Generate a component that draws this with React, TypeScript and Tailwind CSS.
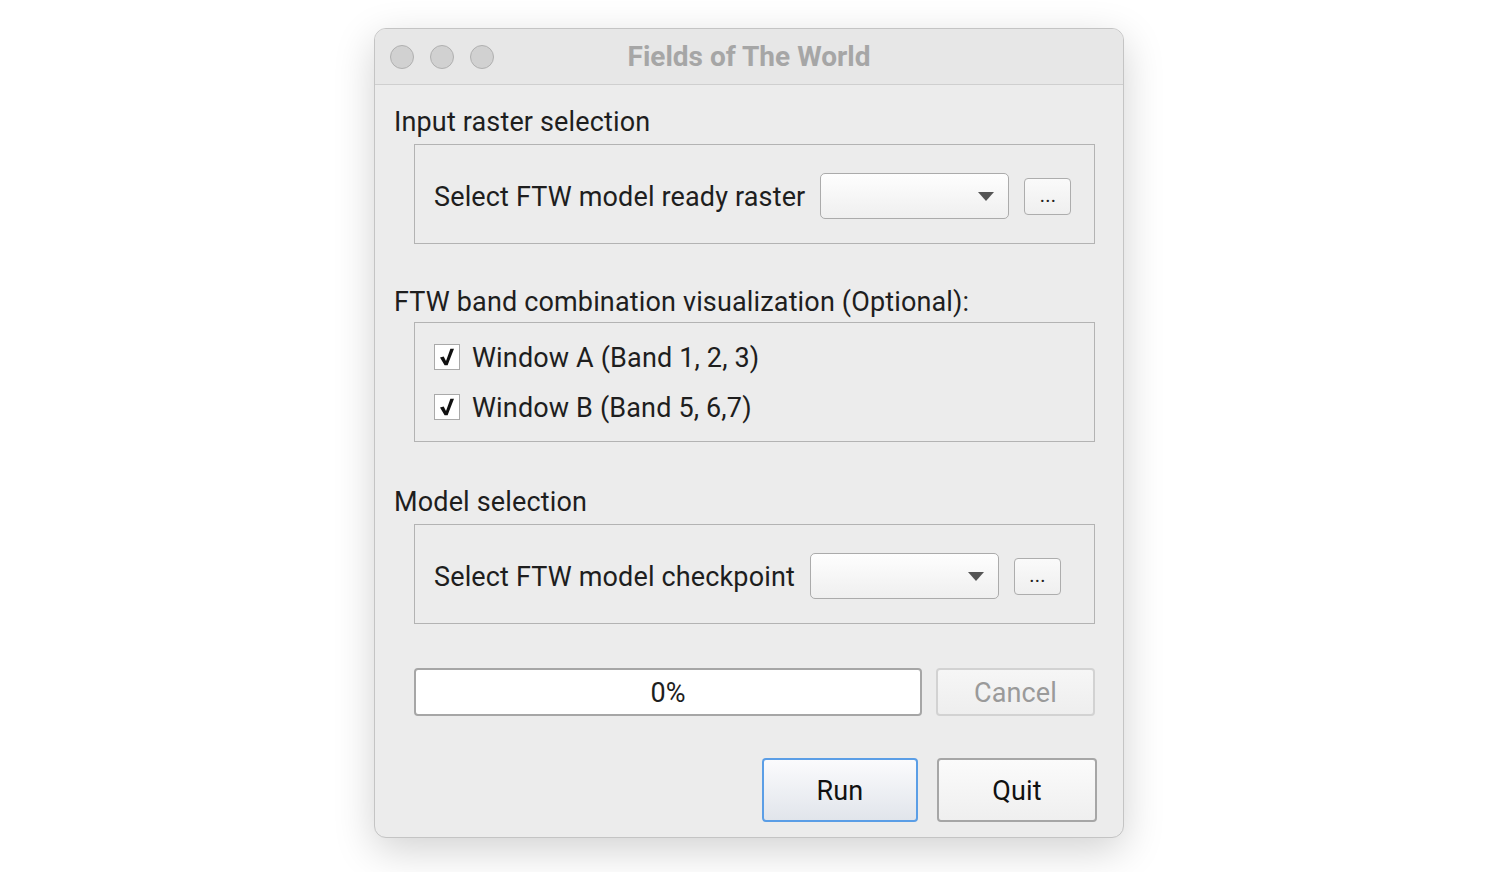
import React from "react";

const font = { fontFamily: "Roboto, 'Liberation Sans', sans-serif" };

function Combo() {
  return (
    <div className="flex h-[46px] w-[189px] items-center justify-end rounded-[5px] border border-[#ababab] bg-gradient-to-b from-[#fefefe] to-[#efefef] pr-[14px]">
      <svg width="16" height="9" viewBox="0 0 16 9">
        <path d="M0 0 L16 0 L8 9 Z" fill="#555555" />
      </svg>
    </div>
  );
}

function Dots() {
  return (
    <div className="flex h-[37px] w-[47px] items-center justify-center rounded-[4px] border border-[#adadad] bg-gradient-to-b from-[#fafafa] to-[#efefef] pb-[2px] text-[20px] leading-none text-[#222]">
      ...
    </div>
  );
}

function Check({ label }: { label: string }) {
  return (
    <div className="flex h-[26px] items-center gap-[12px]">
      <div className="flex h-[26px] w-[26px] items-center justify-center border border-[#a9a9a9] bg-white">
        <svg width="18" height="18" viewBox="0 0 18 18">
          <path d="M2 9.4 L5.7 8.4 L8 13 L12.4 0.8 L16 0.8 L9.6 17.2 L6.6 17.2 Z" fill="#111" />
        </svg>
      </div>
      <span className="pt-[2px] text-[27px] leading-none tracking-[0.15px] text-[#1e1e1e]">{label}</span>
    </div>
  );
}

export default function App() {
  return (
    <div className="min-h-[872px] w-[1504px] bg-white pl-[374px] pt-[28px]" style={font}>
      <div className="flex h-[810px] w-[750px] flex-col overflow-hidden rounded-[12px] border border-[#c4c4c4] bg-[#ececec] shadow-[0_12px_40px_rgba(0,0,0,0.18)]">
        {/* Title bar */}
        <div className="relative flex h-[56px] shrink-0 items-center border-b border-[#cfcfcf] bg-[#e7e7e7]">
          <div className="flex gap-[16px] pl-[15px]">
            <div className="h-[24px] w-[24px] rounded-full border border-[#b0b0b0] bg-[#d1d1d1]" />
            <div className="h-[24px] w-[24px] rounded-full border border-[#b0b0b0] bg-[#d1d1d1]" />
            <div className="h-[24px] w-[24px] rounded-full border border-[#b0b0b0] bg-[#d1d1d1]" />
          </div>
          <div className="absolute inset-0 flex items-center justify-center text-[28px] font-bold text-[#a6a6a6]">
            Fields of The World
          </div>
        </div>

        {/* Body */}
        <div className="flex flex-col pl-[19px] pr-[28px] pt-[21px] text-[#1e1e1e] tracking-[0.15px]">
          <div className="h-[30px] pt-[1px] text-[27px] leading-[30px]">Input raster selection</div>
          <div className="ml-[20px] mt-[8px] flex h-[100px] items-center gap-[15px] border border-[#b3b3b3] pl-[19px] pt-[4px]">
            <span className="pt-[2px] text-[27px] leading-none">Select FTW model ready raster</span>
            <Combo />
            <Dots />
          </div>

          <div className="mt-[42px] h-[30px] pt-[1px] text-[27px] leading-[30px]">FTW band combination visualization (Optional):</div>
          <div className="ml-[20px] mt-[6px] flex h-[120px] flex-col justify-center gap-[24px] border border-[#b3b3b3] pl-[19px]">
            <Check label="Window A (Band 1, 2, 3)" />
            <Check label="Window B (Band 5, 6,7)" />
          </div>

          <div className="mt-[44px] h-[30px] pt-[1px] text-[27px] leading-[30px]">Model selection</div>
          <div className="ml-[20px] mt-[8px] flex h-[100px] items-center gap-[15px] border border-[#b3b3b3] pl-[19px] pt-[4px]">
            <span className="pt-[2px] text-[27px] leading-none">Select FTW model checkpoint</span>
            <Combo />
            <Dots />
          </div>

          <div className="ml-[20px] mt-[44px] flex h-[48px] gap-[14px]">
            <div className="flex h-[48px] w-[508px] items-center justify-center rounded-[4px] border-2 border-[#a6a6a6] bg-white pt-[3px] text-[27px] text-[#1e1e1e]">
              0%
            </div>
            <div className="flex h-[48px] w-[159px] items-center justify-center rounded-[4px] border-2 border-[#d2d2d2] bg-gradient-to-b from-[#f6f6f6] to-[#eeeeee] pt-[3px] text-[27px] text-[#9a9a9a]">
              Cancel
            </div>
          </div>

          <div className="-mr-[2px] mt-[42px] flex justify-end gap-[19px]">
            <div className="flex h-[64px] w-[156px] items-center justify-center rounded-[4px] border-2 border-[#5b9ee6] bg-gradient-to-b from-[#fbfbfd] to-[#e1e5eb] pt-[3px] text-[27px] text-[#111]">
              Run
            </div>
            <div className="flex h-[64px] w-[160px] items-center justify-center rounded-[4px] border-2 border-[#a6a6a6] bg-gradient-to-b from-[#fbfbfb] to-[#efefef] pt-[3px] text-[27px] text-[#111]">
              Quit
            </div>
          </div>
        </div>
      </div>
    </div>
  );
}
